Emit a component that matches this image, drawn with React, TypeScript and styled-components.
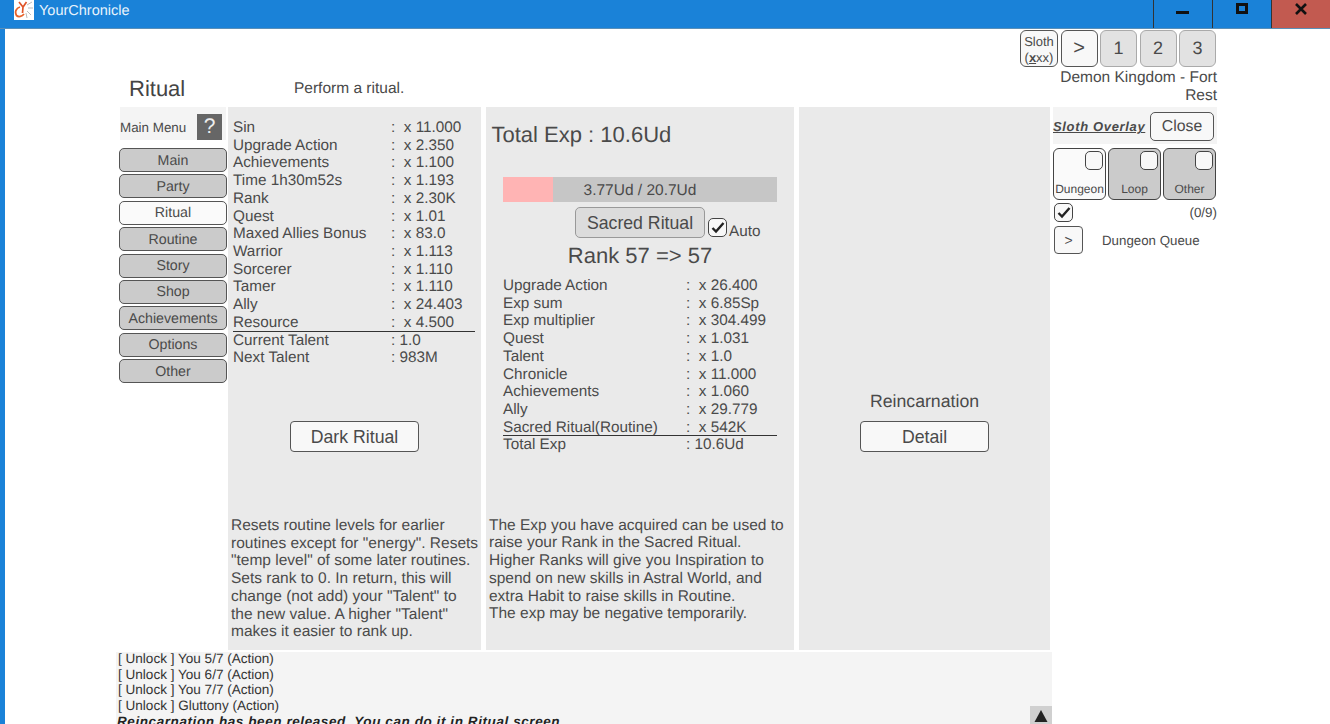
import React from "react"
import styled, { createGlobalStyle } from "styled-components"

const Global = createGlobalStyle`
  html, body { margin: 0; padding: 0; height: 100%; overflow: hidden; background: #fff; }
  body { font-family: "Liberation Sans", Arial, sans-serif; color: #4a4a4a; text-rendering: geometricPrecision; }
  #root { height: 100%; }
`

const Window = styled.div`
  width: 1330px;
  height: 724px;
  display: flex;
  flex-direction: column;
  background: #1a82d8;
  overflow: hidden;
`
const TitleBar = styled.div`
  height: 28px;
  flex: none;
  display: flex;
  align-items: flex-start;
  border-bottom: 1px solid #5a8fb8;
`
const Logo = styled.svg`
  margin-left: 14px;
  width: 20px;
  height: 20px;
  background: #fff;
  flex: none;
`
const TitleText = styled.div`
  margin-left: 5px;
  font-size: 14.5px;
  line-height: 22px;
  color: #e8f3fc;
`
const WinButtons = styled.div`
  margin-left: auto;
  display: flex;
`
const WinButton = styled.div<{ $close?: boolean }>`
  width: 59px;
  height: 28px;
  box-sizing: border-box;
  border-left: 1px solid #333;
  background: ${p => (p.$close ? "#c25a50" : "#1a82d8")};
  display: flex;
  justify-content: center;
  padding-top: 3px;
`
const Client = styled.div`
  flex: 1;
  margin-left: 5px;
  background: #fff;
  min-height: 0;
  display: flex;
  flex-direction: column;
  padding-left: 114px;
`
const Header = styled.div`
  height: 78px;
  flex: none;
  display: flex;
`
const PageTitle = styled.div`
  width: 175px;
  padding: 46px 0 0 10px;
  box-sizing: border-box;
  font-size: 22px;
  line-height: 28px;
  color: #444;
`
const PageDesc = styled.div`
  padding-top: 51px;
  font-size: 15.5px;
  line-height: 17px;
  width: 600px;
`
const HeaderRight = styled.div`
  margin-left: auto;
  margin-right: 113px;
  width: 200px;
  padding-top: 1px;
  display: flex;
  flex-direction: column;
  align-items: flex-end;
`
const QuickRow = styled.div`
  display: flex;
  gap: 2.5px;
  margin-right: 1px;
`
const SlothKey = styled.div`
  width: 38px;
  height: 37px;
  box-sizing: border-box;
  border: 1px solid #555;
  border-radius: 6px;
  background: #f8f8f8;
  font-size: 13px;
  line-height: 15.5px;
  text-align: center;
  padding-top: 3px;
  u { font-weight: bold; }
`
const QuickButton = styled.div<{ $active?: boolean }>`
  width: 37px;
  height: 37px;
  box-sizing: border-box;
  border: 1px solid ${p => (p.$active ? "#555" : "#aaa")};
  border-radius: 6px;
  background: ${p => (p.$active ? "#f8f8f8" : "#e2e2e2")};
  font-size: ${p => (p.$active ? "20px" : "18px")};
  display: flex;
  align-items: center;
  justify-content: center;
`
const Location = styled.div`
  font-size: 15.5px;
  line-height: 17.5px;
  text-align: right;
  width: 170px;
  margin-top: 2px;
`
const Main = styled.div`
  height: 543px;
  flex: none;
  display: flex;
  align-items: flex-start;
`
const Menu = styled.div`
  width: 108px;
  margin-right: 1px;
  flex: none;
`
const MenuHead = styled.div`
  height: 33px;
  margin: 0 1px;
  background: #f4f4f4;
  display: flex;
  align-items: center;
  justify-content: space-between;
  font-size: 13.4px;
  padding-top: 7px;
  box-sizing: border-box;
`
const HelpBox = styled.div`
  width: 25px;
  height: 26px;
  background: #666;
  color: #eee;
  font-size: 21px;
  display: flex;
  align-items: center;
  justify-content: center;
  margin-right: 4px;
`
const MenuButtons = styled.div`
  display: flex;
  flex-direction: column;
  gap: 2.4px;
  margin-top: 8px;
`
const MenuButton = styled.div<{ $active?: boolean }>`
  height: 24px;
  box-sizing: border-box;
  border: 1px solid #555;
  border-radius: 5px;
  background: ${p => (p.$active ? "#fafafa" : "#cbcbcb")};
  font-size: 14.2px;
  padding-top: 1px;
  display: flex;
  align-items: center;
  justify-content: center;
`
const Panel = styled.div<{ $w: number }>`
  width: ${p => p.$w}px;
  height: 543px;
  flex: none;
  margin-right: 5px;
  background: #eaeaea;
  box-sizing: border-box;
  display: flex;
  flex-direction: column;
`
const Spacer = styled.div<{ $h: number }>`
  height: ${p => p.$h}px;
  flex: none;
`
const StatTable = styled.div<{ $left: number; $right: number; $label: number }>`
  margin: 0 ${p => p.$right}px 0 ${p => p.$left}px;
  font-size: 15.3px;
  line-height: 17.72px;
  display: grid;
  grid-template-columns: ${p => p.$label}px 1fr;
`
const StatRow = styled.div<{ $rule?: boolean }>`
  display: contents;
  & > div {
    border-bottom: ${p => (p.$rule ? "1px solid #333" : "none")};
    height: 17.72px;
    box-sizing: border-box;
    white-space: pre;
  }
`
const Wide = styled.button`
  font: inherit;
  font-size: 17.7px;
  color: #4a4a4a;
  width: 129px;
  height: 31px;
  background: #f8f8f8;
  border: 1px solid #555;
  border-radius: 4px;
  padding: 2px 0 0;
  display: block;
`
const DarkSlot = styled.div`
  margin-left: 62px;
`
const Blurb = styled.div<{ $bottom: number }>`
  margin-top: auto;
  padding: 0 0 ${p => p.$bottom}px 3px;
  font-size: 15.5px;
  line-height: 17.7px;
  white-space: nowrap;
`
const TotalExp = styled.div`
  font-size: 22px;
  line-height: 28px;
  padding: 14px 0 0 5.5px;
`
const ExpBar = styled.div`
  margin: 28px 17px 0;
  height: 25px;
  background: #c6c6c6;
  position: relative;
  font-size: 15.5px;
  line-height: 27px;
  text-align: center;
  flex: none;
`
const ExpFill = styled.div`
  position: absolute;
  left: 0;
  top: 0;
  bottom: 0;
  background: #ffb4b4;
`
const ExpLabel = styled.span`
  position: relative;
`
const RitualRow = styled.div`
  display: flex;
  align-items: flex-start;
  margin: 5px 0 0 89px;
`
const RitualButton = styled.button`
  font: inherit;
  font-size: 17.7px;
  color: #4a4a4a;
  width: 130px;
  height: 31px;
  background: #dcdcdc;
  border: 1px solid #999;
  border-radius: 5px;
  padding: 2px 0 0;
`
const CheckBox = styled.div`
  width: 19px;
  height: 19px;
  box-sizing: border-box;
  border: 1px solid #444;
  border-radius: 5px;
  background: #f8f8f8;
  flex: none;
  display: flex;
  align-items: center;
  justify-content: center;
`
const AutoCheck = styled(CheckBox)`
  margin: 11px 2px 0 3px;
`
const AutoLabel = styled.span`
  font-size: 15.3px;
  line-height: 17px;
  margin-top: 16px;
`
const RankLine = styled.div`
  font-size: 22px;
  line-height: 28px;
  text-align: center;
  margin: 2px 0 7px;
`
const CenterStack = styled.div`
  margin-top: 284px;
  display: flex;
  flex-direction: column;
  align-items: center;
`
const Reincarn = styled.div`
  font-size: 17.7px;
  line-height: 20px;
  margin-bottom: 10px;
`
const Sloth = styled.div`
  width: 164px;
  margin-left: -2px;
  flex: none;
`
const SlothHead = styled.div`
  height: 33px;
  background: #f4f4f4;
  display: flex;
  align-items: center;
  justify-content: space-between;
  padding-top: 3px;
  padding-bottom: 1px;
`
const SlothTitle = styled.span`
  font-size: 13px;
  font-style: italic;
  font-weight: bold;
  text-decoration: underline;
  letter-spacing: 0.65px;
  white-space: nowrap;
`
const CloseButton = styled.div`
  width: 64px;
  height: 29px;
  margin-right: 3px;
  box-sizing: border-box;
  border: 1px solid #555;
  border-radius: 5px;
  background: #f8f8f8;
  font-size: 15.8px;
  display: flex;
  align-items: center;
  justify-content: center;
`
const TabRow = styled.div`
  display: flex;
  gap: 2px;
  margin-top: 4px;
`
const FilterTab = styled.div<{ $active?: boolean }>`
  width: 53px;
  height: 52px;
  box-sizing: border-box;
  border: 1px solid #444;
  border-radius: 6px;
  background: ${p => (p.$active ? "#fafafa" : "#cbcbcb")};
  position: relative;
  font-size: 12px;
  text-align: center;
  padding-top: 33px;
  white-space: nowrap;
  overflow: hidden;
`
const TabBox = styled.div`
  position: absolute;
  top: 2px;
  right: 2px;
  width: 18px;
  height: 19px;
  box-sizing: border-box;
  border: 1px solid #444;
  border-radius: 5px;
  background: #f8f8f8;
`
const CountRow = styled.div`
  display: flex;
  justify-content: space-between;
  align-items: center;
  margin-top: 3px;
  font-size: 13.4px;
  padding-left: 1px;
`
const QueueRow = styled.div`
  display: flex;
  align-items: center;
  margin-top: 4px;
  font-size: 13.3px;
  padding-left: 1px;
`
const QueueButton = styled.div`
  width: 29px;
  height: 28px;
  box-sizing: border-box;
  border: 1px solid #555;
  border-radius: 4px;
  background: #f8f8f8;
  display: flex;
  align-items: center;
  justify-content: center;
  margin-right: 19px;
  font-size: 14px;
`
const Log = styled.div`
  flex: 1;
  margin: 2px 0 0 -3px;
  width: 936px;
  box-sizing: border-box;
  background: #f4f4f4;
  overflow: hidden;
  position: relative;
  padding: 0 0 0 2px;
  color: #333;
  font-size: 13.55px;
  line-height: 15.6px;
`
const LogLines = styled.div`
  margin-top: -1px;
`
const LogNotice = styled.div`
  font-style: italic;
  font-weight: bold;
  margin: 1px 0 0 -1px;
  white-space: nowrap;
  font-size: 13.5px;
  color: #222;
  letter-spacing: 0.58px;
`
const LogToggle = styled.div`
  position: absolute;
  right: 0;
  bottom: 0;
  width: 22px;
  height: 18px;
  padding-bottom: 2px;
  box-sizing: border-box;
  background: #d0d0d0;
  display: flex;
  align-items: flex-end;
  justify-content: center;
`

const SmallCheck = () => (
  <svg width="14" height="13" viewBox="0 0 14 13">
    <path d="M1.5 7 L5 10.5 L12.5 2" fill="none" stroke="#222" strokeWidth="2.4" />
  </svg>
)

type Row = [string, string, boolean?]

const talentRows: Row[] = [
  ["Sin", ":  x 11.000"],
  ["Upgrade Action", ":  x 2.350"],
  ["Achievements", ":  x 1.100"],
  ["Time 1h30m52s", ":  x 1.193"],
  ["Rank", ":  x 2.30K"],
  ["Quest", ":  x 1.01"],
  ["Maxed Allies Bonus", ":  x 83.0"],
  ["Warrior", ":  x 1.113"],
  ["Sorcerer", ":  x 1.110"],
  ["Tamer", ":  x 1.110"],
  ["Ally", ":  x 24.403"],
  ["Resource", ":  x 4.500", true],
  ["Current Talent", ": 1.0"],
  ["Next Talent", ": 983M"],
]

const expRows: Row[] = [
  ["Upgrade Action", ":  x 26.400"],
  ["Exp sum", ":  x 6.85Sp"],
  ["Exp multiplier", ":  x 304.499"],
  ["Quest", ":  x 1.031"],
  ["Talent", ":  x 1.0"],
  ["Chronicle", ":  x 11.000"],
  ["Achievements", ":  x 1.060"],
  ["Ally", ":  x 29.779"],
  ["Sacred Ritual(Routine)", ":  x 542K", true],
  ["Total Exp", ": 10.6Ud"],
]

const menuItems = ["Main", "Party", "Ritual", "Routine", "Story", "Shop", "Achievements", "Options", "Other"]

function Stats({ rows, left, right, label }: { rows: Row[]; left: number; right: number; label: number }) {
  return (
    <StatTable $left={left} $right={right} $label={label}>
      {rows.map(([name, value, rule]) => (
        <StatRow key={name} $rule={rule}>
          <div>{name}</div>
          <div>{value}</div>
        </StatRow>
      ))}
    </StatTable>
  )
}

export default function App() {
  return (
    <>
      <Global />
      <Window>
        <TitleBar>
          <Logo viewBox="0 0 20 20">
            <path d="M6 7 C2 8 0.5 12 2.5 15.5 C4.5 17.5 8 16.5 10 14" fill="none" stroke="#e8622a" strokeWidth="1.8" />
            <path d="M5 2 L9 7 L12.5 2 M9 7 L8.5 13" fill="none" stroke="#e0552a" strokeWidth="1.7" />
            <path d="M13 5 L18 2 M14 8 L19 8 M13 11 L17 15 M12 13 L13 18" stroke="#bbb" strokeWidth="1" />
          </Logo>
          <TitleText>YourChronicle</TitleText>
          <WinButtons>
            <WinButton>
              <svg width="14" height="14" viewBox="0 0 14 14"><rect x="0" y="8" width="13" height="3" fill="#111" /></svg>
            </WinButton>
            <WinButton>
              <svg width="12" height="12" viewBox="0 0 12 12"><rect x="1.5" y="1.5" width="9" height="8" fill="none" stroke="#111" strokeWidth="3" /></svg>
            </WinButton>
            <WinButton $close>
              <svg width="12" height="12" viewBox="0 0 12 12"><path d="M1 1 L11 11 M11 1 L1 11" stroke="#111" strokeWidth="2.6" /></svg>
            </WinButton>
          </WinButtons>
        </TitleBar>
        <Client>
          <Header>
            <PageTitle>Ritual</PageTitle>
            <PageDesc>Perform a ritual.</PageDesc>
            <HeaderRight>
              <QuickRow>
                <SlothKey>Sloth<br />(<u>x</u>xx)</SlothKey>
                <QuickButton $active>&gt;</QuickButton>
                <QuickButton>1</QuickButton>
                <QuickButton>2</QuickButton>
                <QuickButton>3</QuickButton>
              </QuickRow>
              <Location>Demon Kingdom - Fort Rest</Location>
            </HeaderRight>
          </Header>
          <Main>
            <Menu>
              <MenuHead>
                <span>Main Menu</span>
                <HelpBox>?</HelpBox>
              </MenuHead>
              <MenuButtons>
                {menuItems.map(m => (
                  <MenuButton key={m} $active={m === "Ritual"}>{m}</MenuButton>
                ))}
              </MenuButtons>
            </Menu>
            <Panel $w={253}>
              <Spacer $h={12} />
              <Stats rows={talentRows} left={5} right={6} label={158} />
              <Spacer $h={54} />
              <DarkSlot><Wide>Dark Ritual</Wide></DarkSlot>
              <Blurb $bottom={9}>
                Resets routine levels for earlier<br />
                routines except for "energy". Resets<br />
                "temp level" of some later routines.<br />
                Sets rank to 0. In return, this will<br />
                change (not add) your "Talent" to<br />
                the new value. A higher "Talent"<br />
                makes it easier to rank up.
              </Blurb>
            </Panel>
            <Panel $w={308}>
              <TotalExp>Total Exp : 10.6Ud</TotalExp>
              <ExpBar>
                <ExpFill style={{ width: `${(3.77 / 20.7) * 100}%` }} />
                <ExpLabel>3.77Ud / 20.7Ud</ExpLabel>
              </ExpBar>
              <RitualRow>
                <RitualButton>Sacred Ritual</RitualButton>
                <AutoCheck><SmallCheck /></AutoCheck>
                <AutoLabel>Auto</AutoLabel>
              </RitualRow>
              <RankLine>Rank 57 =&gt; 57</RankLine>
              <Stats rows={expRows} left={17} right={17} label={183} />
              <Blurb $bottom={27}>
                The Exp you have acquired can be used to<br />
                raise your Rank in the Sacred Ritual.<br />
                Higher Ranks will give you Inspiration to<br />
                spend on new skills in Astral World, and<br />
                extra Habit to raise skills in Routine.<br />
                The exp may be negative temporarily.
              </Blurb>
            </Panel>
            <Panel $w={251}>
              <CenterStack>
                <Reincarn>Reincarnation</Reincarn>
                <Wide>Detail</Wide>
              </CenterStack>
            </Panel>
            <Sloth>
              <SlothHead>
                <SlothTitle>Sloth Overlay</SlothTitle>
                <CloseButton>Close</CloseButton>
              </SlothHead>
              <TabRow>
                <FilterTab $active>Dungeon<TabBox /></FilterTab>
                <FilterTab>Loop<TabBox /></FilterTab>
                <FilterTab>Other<TabBox /></FilterTab>
              </TabRow>
              <CountRow>
                <CheckBox><SmallCheck /></CheckBox>
                <span>(0/9)</span>
              </CountRow>
              <QueueRow>
                <QueueButton>&gt;</QueueButton>
                <span>Dungeon Queue</span>
              </QueueRow>
            </Sloth>
          </Main>
          <Log>
            <LogLines>
              <div>[ Unlock ] You 5/7 (Action)</div>
              <div>[ Unlock ] You 6/7 (Action)</div>
              <div>[ Unlock ] You 7/7 (Action)</div>
              <div>[ Unlock ] Gluttony (Action)</div>
            </LogLines>
            <LogNotice>Reincarnation has been released. You can do it in Ritual screen</LogNotice>
            <LogToggle>
              <svg width="14" height="12" viewBox="0 0 14 12"><path d="M7 0 L13.5 12 L0.5 12 Z" fill="#222" /></svg>
            </LogToggle>
          </Log>
        </Client>
      </Window>
    </>
  )
}
